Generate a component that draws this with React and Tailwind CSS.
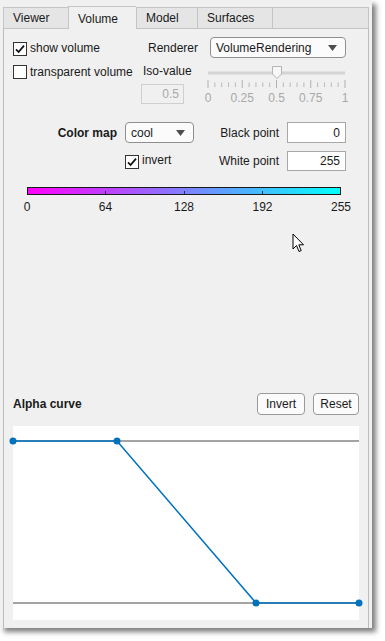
import React from "react";

function Checkbox({ checked }) {
  return (
    <div className="w-[14px] h-[14px] shrink-0 border border-[#333333] bg-white flex items-center justify-center">
      {checked && (
        <svg width="12" height="12" viewBox="0 0 12 12">
          <path d="M2 6.3 L4.6 9 L10 2.6" fill="none" stroke="#111" strokeWidth="1.8" />
        </svg>
      )}
    </div>
  );
}

function Arrow() {
  return (
    <svg width="9" height="6" viewBox="0 0 9 6">
      <path d="M0 0 L9 0 L4.5 6 Z" fill="#4d4d4d" />
    </svg>
  );
}

function Tab({ children, selected, w }) {
  if (selected) {
    return (
      <div className={`${w} h-[23px] bg-[#f0f0f0] border-t border-l border-[#c4c4c4] pl-[9px] flex items-center pt-[1px] text-[#1a1a1a]`}>
        {children}
      </div>
    );
  }
  return (
    <div className={`${w} h-[22px] bg-[#e5e5e5] border-t border-l border-b border-[#c4c4c4] pl-[9px] flex items-center text-[#1a1a1a]`}>
      {children}
    </div>
  );
}

function Slider() {
  const majors = [0, 1, 2, 3, 4].map((i) => 5 + i * 34.25);
  const minors = Array.from({ length: 21 }, (_, j) => 5 + j * 6.85);
  const labels = ["0", "0.25", "0.5", "0.75", "1"];
  return (
    <svg width="147" height="42" viewBox="0 0 147 42" overflow="visible">
      <line x1="5" y1="11" x2="142" y2="11" stroke="#d4d4d4" strokeWidth="3" />
      {minors.map((x, j) =>
        j % 5 === 0 ? null : (
          <line key={j} x1={x} y1="20.5" x2={x} y2="25" stroke="#b8b8b8" strokeWidth="1" />
        )
      )}
      {majors.map((x, i) => (
        <line key={i} x1={x} y1="18" x2={x} y2="26" stroke="#b0b0b0" strokeWidth="1" />
      ))}
      <polygon points="69.5,4.5 78.5,4.5 78.5,12 74,16.5 69.5,12" fill="#f7f7f7" stroke="#b4b4b4" strokeWidth="1" />
      {majors.map((x, i) => (
        <text
          key={i}
          x={x}
          y="40"
          textAnchor="middle"
          fontFamily="'Liberation Sans', Arial, sans-serif"
          fontSize="12"
          fill="#a8a8a8"
        >
          {labels[i]}
        </text>
      ))}
    </svg>
  );
}

function AxisLabel({ children }) {
  return (
    <div className="w-0 flex justify-center">
      <span className="whitespace-nowrap">{children}</span>
    </div>
  );
}

export default function App() {
  return (
    <div className="w-[385px] h-[641px] bg-white font-['Liberation_Sans',Arial,sans-serif] text-[12px] leading-[14px] text-[#1a1a1a] overflow-hidden">
      <div className="relative w-[372px] h-[628px] bg-[#f0f0f0] shadow-[4px_4px_5px_rgba(0,0,0,0.5)] pt-[6px] px-[3px] flex flex-col">
        {/* Tabs */}
        <div className="flex items-end h-[23px]">
          <Tab w="w-[65px]">Viewer</Tab>
          <Tab w="w-[68px]" selected>Volume</Tab>
          <Tab w="w-[61px]">Model</Tab>
          <Tab w="w-[75px]">Surfaces</Tab>
          <div className="flex-1 h-[22px] bg-[#e5e5e5] border-t border-l border-r border-b border-[#c4c4c4]" />
        </div>

        {/* Panel */}
        <div className="flex-1 flex flex-col border-l border-r border-[#bcbcbc] pl-[9px] pr-[9px] pb-[8px]">
          {/* Row 1 */}
          <div className="mt-[8px] flex h-[21px] items-center">
            <div className="w-[185px] flex items-center">
              <div className="mt-[2px]"><Checkbox checked /></div>
              <span className="ml-[3px]">show volume</span>
              <span className="ml-auto">Renderer</span>
            </div>
            <div className="ml-[12px] w-[136px] h-[21px] rounded-[4px] border border-[#8f8f8f] bg-[#fbfbfb] flex items-center pl-[5px] pr-[8px]">
              <span>VolumeRendering</span>
              <span className="ml-auto flex"><Arrow /></span>
            </div>
          </div>

          {/* Row 2 */}
          <div className="mt-[4px] flex h-[42px]">
            <div className="w-[128px] flex items-start pt-[3px]">
              <Checkbox />
              <span className="ml-[3px]">transparent volume</span>
            </div>
            <div className="w-[62px] flex flex-col">
              <span className="pl-[2px] mt-[2px]">Iso-value</span>
              <div className="mt-[6px] w-[43px] h-[20px] border border-[#cfcfcf] bg-[#f0f0f0] flex items-center justify-end pr-[4px] text-[#a8a8a8]">
                0.5
              </div>
            </div>
            <Slider />
          </div>

          {/* Color map row */}
          <div className="mt-[18px] flex h-[21px] items-center">
            <span className="w-[104px] text-right font-bold">Color map</span>
            <div className="ml-[8px] w-[69px] h-[21px] rounded-[4px] border border-[#8f8f8f] bg-[#fbfbfb] flex items-center pl-[5px] pr-[8px]">
              <span>cool</span>
              <span className="ml-auto flex"><Arrow /></span>
            </div>
            <span className="w-[85px] text-right">Black point</span>
            <div className="ml-[8px] w-[59px] h-[21px] border border-[#a8a8a8] bg-white flex items-center justify-end pr-[5px]">
              0
            </div>
          </div>

          {/* invert row */}
          <div className="mt-[8px] flex h-[20px] items-center">
            <div className="w-[266px] flex items-center">
              <div className="ml-[112px] mt-[1px]"><Checkbox checked /></div>
              <span className="ml-[3px] -mt-[3px]">invert</span>
              <span className="ml-auto">White point</span>
            </div>
            <div className="ml-[8px] w-[59px] h-[20px] border border-[#a8a8a8] bg-white flex items-center justify-end pr-[5px]">
              255
            </div>
          </div>

          {/* Colorbar */}
          <div className="mt-[16px] ml-[14px] w-[314px] h-[8px] border border-[#1a1a1a] bg-[linear-gradient(to_right,#ff00ff,#00ffff)] flex justify-evenly items-end">
            <div className="w-px h-[3px] bg-[#333]" />
            <div className="w-px h-[3px] bg-[#333]" />
            <div className="w-px h-[3px] bg-[#333]" />
          </div>
          <div className="mt-[5px] ml-[14px] w-[314px] flex justify-between">
            <AxisLabel>0</AxisLabel>
            <AxisLabel>64</AxisLabel>
            <AxisLabel>128</AxisLabel>
            <AxisLabel>192</AxisLabel>
            <AxisLabel>255</AxisLabel>
          </div>

          {/* Alpha curve */}
          <div className="mt-auto flex h-[22px] items-center">
            <span className="font-bold">Alpha curve</span>
            <div className="ml-auto w-[48px] h-[22px] rounded-[4px] border border-[#9a9a9a] bg-[#fbfbfb] flex items-center justify-center">
              Invert
            </div>
            <div className="ml-[8px] w-[46px] h-[22px] rounded-[4px] border border-[#9a9a9a] bg-[#fbfbfb] flex items-center justify-center">
              Reset
            </div>
          </div>
          <div className="mt-[11px] h-[194px] w-full bg-white">
            <svg width="346" height="194" viewBox="0 0 346 194" overflow="visible">
              <line x1="0" y1="15" x2="346" y2="15" stroke="#858585" strokeWidth="1.3" />
              <line x1="0" y1="177" x2="346" y2="177" stroke="#858585" strokeWidth="1.3" />
              <polyline points="0,15 104,15 243,177 346,177" fill="none" stroke="#0072bd" strokeWidth="1.5" />
              <circle cx="0" cy="15" r="3.5" fill="#0072bd" />
              <circle cx="104" cy="15" r="3.5" fill="#0072bd" />
              <circle cx="243" cy="177" r="3.5" fill="#0072bd" />
              <circle cx="346" cy="177" r="3.5" fill="#0072bd" />
            </svg>
          </div>
        </div>

        {/* Mouse cursor overlay */}
        <svg className="absolute left-[292px] top-[233px]" width="14" height="21" viewBox="0 0 14 21">
          <path
            d="M1 1 L1 16 L4.5 12.5 L7 18.5 L9.2 17.6 L6.8 11.8 L11.5 11.8 Z"
            fill="#ffffff"
            stroke="#000000"
            strokeWidth="1"
            strokeLinejoin="round"
          />
        </svg>
      </div>
    </div>
  );
}
